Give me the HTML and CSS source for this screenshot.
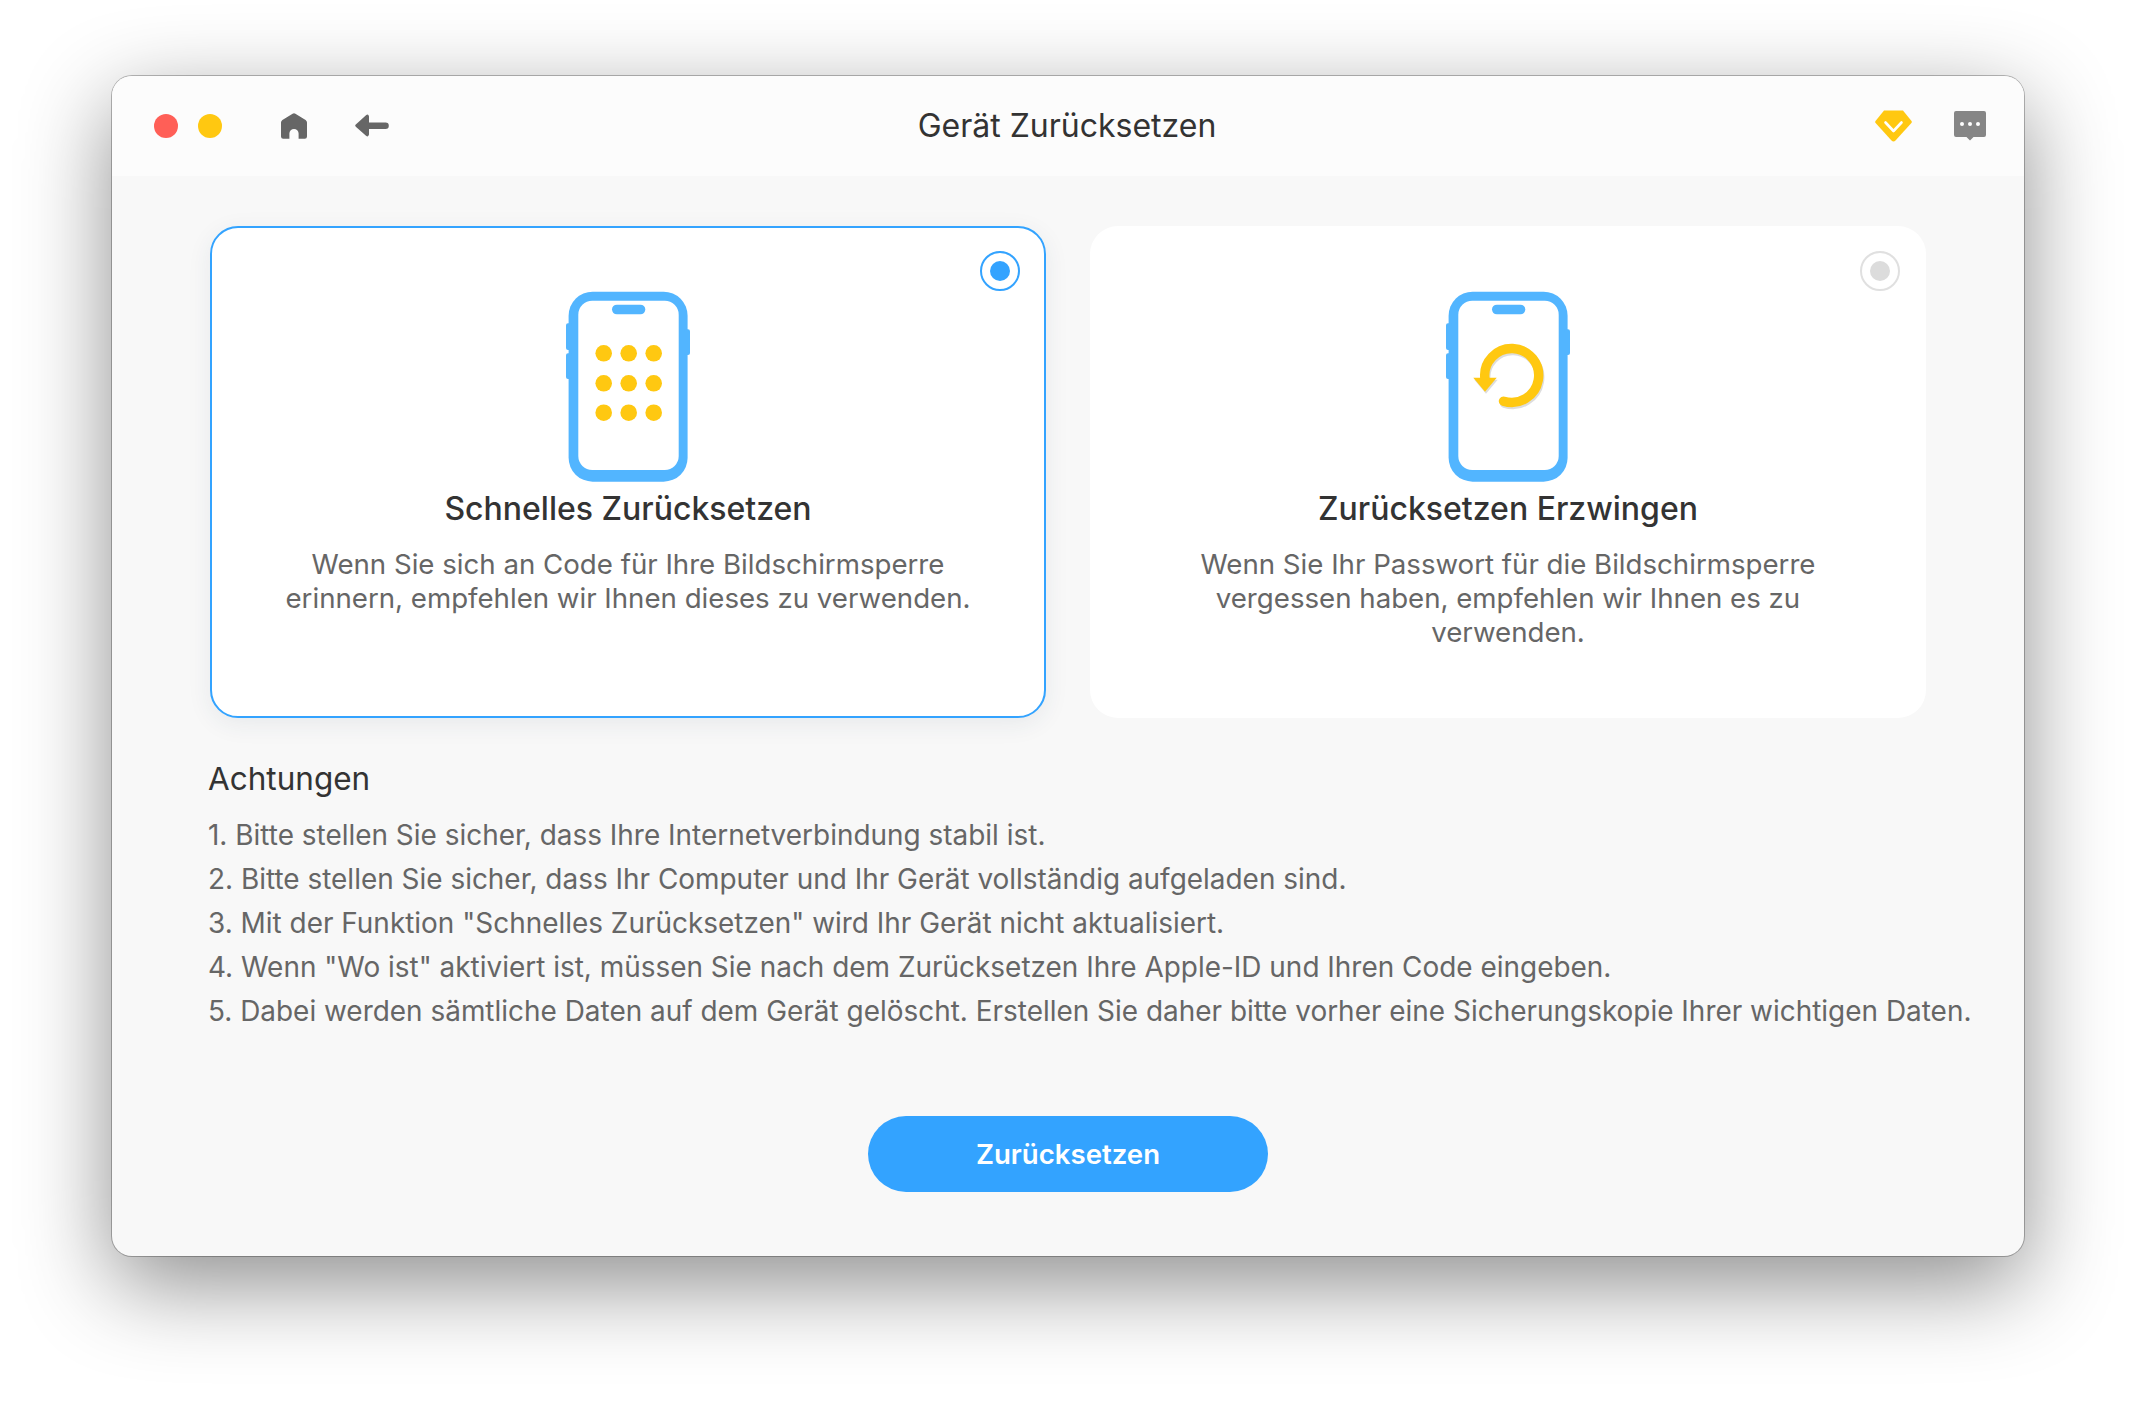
FILE: index.html
```html
<!DOCTYPE html>
<html lang="de">
<head>
<meta charset="utf-8">
<title>Gerät Zurücksetzen</title>
<link rel="stylesheet" href="styles.css">
</head>
<body>
<main class="window">
  <header class="titlebar">
    <div class="bar-left">
      <span class="light light-red"></span>
      <span class="light light-yellow"></span>
      <svg class="ico-home" width="26" height="26" viewBox="0 0 26 26"><path d="M11.6 0.7 Q13 -0.2 14.4 0.7 L24.6 7 Q26 8 26 9.6 V23.5 Q26 25.7 23.8 25.7 H17.6 V20.6 A4.6 4.6 0 0 0 8.4 20.6 V25.7 H2.2 Q0 25.7 0 23.5 V9.6 Q0 8 1.4 7 Z" fill="#666"/></svg>
      <svg class="ico-back" width="34" height="24" viewBox="0 0 34 24"><path d="M0.8 10.4 L11 1.2 Q13.4 -0.4 14 2.4 V8.6 H30.6 A3.2 3.2 0 0 1 30.6 15 H14 V20.6 Q13.4 23.4 11 21.8 L0.8 12.8 Q-0.4 11.6 0.8 10.4 Z" fill="#666"/></svg>
    </div>
    <h1 class="title">Gerät Zurücksetzen</h1>
    <div class="bar-right">
      <svg class="ico-gem" width="37" height="32" viewBox="0 0 37 32"><path d="M9 0.5 H28 L36.5 11 Q37.2 12 36.4 13 L20.5 30.6 Q18.5 32.4 16.5 30.6 L0.6 13 Q-0.2 12 0.5 11 Z" fill="#ffc811"/><path d="M10.5 12.5 L18.5 21 L26.5 12.5" fill="none" stroke="#fff" stroke-width="2.6" stroke-linecap="round" stroke-linejoin="round"/></svg>
      <svg class="ico-chat" width="32" height="30" viewBox="0 0 32 30"><path d="M2 0 H30 Q32 0 32 2 V24 Q32 26 30 26 H19.5 L16 29.5 L12.5 26 H2 Q0 26 0 24 V2 Q0 0 2 0 Z" fill="#868686"/><circle cx="8" cy="13" r="2" fill="#fff"/><circle cx="16" cy="13" r="2" fill="#fff"/><circle cx="24" cy="13" r="2" fill="#fff"/></svg>
    </div>
  </header>

  <div class="content">
    <section class="cards">
      <article class="card card-active">
        <span class="radio radio-on"></span>
        <svg class="phone" width="128" height="192" viewBox="0 0 128 192">
          <rect x="4.6" y="1.7" width="119" height="190" rx="24" fill="#52b5ff"/>
          <rect x="14.3" y="10.7" width="100.4" height="169.3" rx="14" fill="#fff"/>
          <rect x="2" y="33.3" width="6" height="26.7" rx="2" fill="#52b5ff"/>
          <rect x="2" y="63.3" width="6" height="25.7" rx="2" fill="#52b5ff"/>
          <rect x="120" y="39.3" width="6" height="25.7" rx="2" fill="#52b5ff"/>
          <rect x="48" y="14.7" width="33.3" height="9.6" rx="4.8" fill="#52b5ff"/>
          <g fill="#ffc811">
            <circle cx="39.7" cy="63.3" r="8.3"/><circle cx="64.7" cy="63.3" r="8.3"/><circle cx="89.7" cy="63.3" r="8.3"/>
            <circle cx="39.7" cy="93.3" r="8.3"/><circle cx="64.7" cy="93.3" r="8.3"/><circle cx="89.7" cy="93.3" r="8.3"/>
            <circle cx="39.7" cy="122.7" r="8.3"/><circle cx="64.7" cy="122.7" r="8.3"/><circle cx="89.7" cy="122.7" r="8.3"/>
          </g>
        </svg>
        <h2 class="card-title">Schnelles Zurücksetzen</h2>
        <p class="card-text">Wenn Sie sich an Code für Ihre Bildschirmsperre<br>erinnern, empfehlen wir Ihnen dieses zu verwenden.</p>
      </article>
      <article class="card">
        <span class="radio radio-off"></span>
        <svg class="phone" width="128" height="192" viewBox="0 0 128 192">
          <rect x="4.6" y="1.7" width="119" height="190" rx="24" fill="#52b5ff"/>
          <rect x="14.3" y="10.7" width="100.4" height="169.3" rx="14" fill="#fff"/>
          <rect x="2" y="33.3" width="6" height="26.7" rx="2" fill="#52b5ff"/>
          <rect x="2" y="63.3" width="6" height="25.7" rx="2" fill="#52b5ff"/>
          <rect x="120" y="39.3" width="6" height="25.7" rx="2" fill="#52b5ff"/>
          <rect x="48" y="14.7" width="33.3" height="9.6" rx="4.8" fill="#52b5ff"/>
          <g class="reset-arrow">
            <path d="M59.5 111.2 A27 27 0 1 0 40.8 88" fill="none" stroke="#ffc811" stroke-width="9.4" stroke-linecap="round"/>
            <path d="M29.3 87.7 H52.7 L41 101.7 Z" fill="#ffc811"/>
          </g>
        </svg>
        <h2 class="card-title">Zurücksetzen Erzwingen</h2>
        <p class="card-text">Wenn Sie Ihr Passwort für die Bildschirmsperre<br>vergessen haben, empfehlen wir Ihnen es zu<br>verwenden.</p>
      </article>
    </section>

    <section class="notes">
      <h3 class="notes-title">Achtungen</h3>
      <ol class="notes-list">
        <li>1. Bitte stellen Sie sicher, dass Ihre Internetverbindung stabil ist.</li>
        <li>2. Bitte stellen Sie sicher, dass Ihr Computer und Ihr Gerät vollständig aufgeladen sind.</li>
        <li>3. Mit der Funktion "Schnelles Zurücksetzen" wird Ihr Gerät nicht aktualisiert.</li>
        <li>4. Wenn "Wo ist" aktiviert ist, müssen Sie nach dem Zurücksetzen Ihre Apple-ID und Ihren Code eingeben.</li>
        <li>5. Dabei werden sämtliche Daten auf dem Gerät gelöscht. Erstellen Sie daher bitte vorher eine Sicherungskopie Ihrer wichtigen Daten.</li>
      </ol>
    </section>

    <div class="actions">
      <button class="primary" type="button">Zurücksetzen</button>
    </div>
  </div>
</main>
</body>
</html>
```
FILE: styles.css
```css
* { box-sizing: border-box; }
html, body { margin: 0; padding: 0; background: #fff; }
body {
  width: 2136px;
  height: 1404px;
  padding: 76px 112px 0;
  overflow: hidden;
  font-family: Inter, "Noto Sans", sans-serif;
}
.window {
  width: 1912px;
  height: 1180px;
  border-radius: 20px;
  background: #f8f8f8;
  box-shadow: 0 0 0 1px rgba(0,0,0,.26), 0 28px 90px rgba(0,0,0,.45);
  display: flex;
  flex-direction: column;
  overflow: hidden;
}
.titlebar {
  flex: 0 0 100px;
  background: #fcfcfc;
  display: grid;
  grid-template-columns: 1fr auto 1fr;
  align-items: center;
  padding: 0 38px 0 42px;
}
.bar-left { display: flex; align-items: center; }
.light { width: 24px; height: 24px; border-radius: 50%; }
.light-red { background: #ff5f57; margin-right: 20px; }
.light-yellow { background: #ffc811; margin-right: 59px; }
.ico-back { margin-left: 48px; }
.title {
  margin: 0 6px 0 0;
  font-size: 32px;
  line-height: 40px;
  font-weight: 400;
  color: #333;
}
.bar-right { display: flex; justify-content: flex-end; align-items: center; }
.ico-gem { margin-right: 42px; }
.content { flex: 1; display: flex; flex-direction: column; padding: 50px 0 0 96px; }
.cards { display: flex; gap: 44px; padding-left: 2px; }
.card {
  position: relative;
  width: 836px;
  height: 492px;
  border-radius: 28px;
  background: #fff;
  display: flex;
  flex-direction: column;
  align-items: center;
  padding-top: 64px;
  text-align: center;
}
.card-active {
  border: 2px solid #33a3ff;
  padding-top: 62px;
  box-shadow: 0 6px 24px rgba(40,60,90,.08);
}
.radio {
  position: absolute;
  top: 25px;
  right: 26px;
  width: 40px;
  height: 40px;
  border-radius: 50%;
  border: 2px solid #33a3ff;
  display: flex;
  align-items: center;
  justify-content: center;
}
.card-active .radio { top: 23px; right: 24px; }
.radio::after { content: ""; width: 20px; height: 20px; border-radius: 50%; background: #33a3ff; }
.radio-off { border-color: #e0e0e0; }
.radio-off::after { background: #dcdcdc; }
.phone { display: block; }
.reset-arrow { filter: drop-shadow(1.5px 2px 0 #ddd); }
.card-title {
  margin: 5px 0 0;
  font-size: 32px;
  line-height: 44px;
  font-weight: 500;
  color: #333;
}
.card-text {
  margin: 16px 0 0;
  font-size: 27.65px;
  line-height: 34px;
  font-weight: 400;
  color: #666;
}
.notes { padding-top: 38px; }
.notes-title {
  margin: 0;
  font-size: 31.5px;
  line-height: 46px;
  font-weight: 400;
  color: #333;
}
.notes-list {
  list-style: none;
  margin: 11px 0 0;
  padding: 0;
  font-size: 27.95px;
  line-height: 44px;
  color: #666;
  white-space: nowrap;
}
.actions { display: flex; justify-content: center; padding: 83px 96px 0 0; }
.primary {
  width: 400px;
  height: 76px;
  border: 0;
  border-radius: 38px;
  background: #33a3ff;
  color: #fff;
  font-family: inherit;
  font-size: 27.6px;
  font-weight: 600;
}
```
